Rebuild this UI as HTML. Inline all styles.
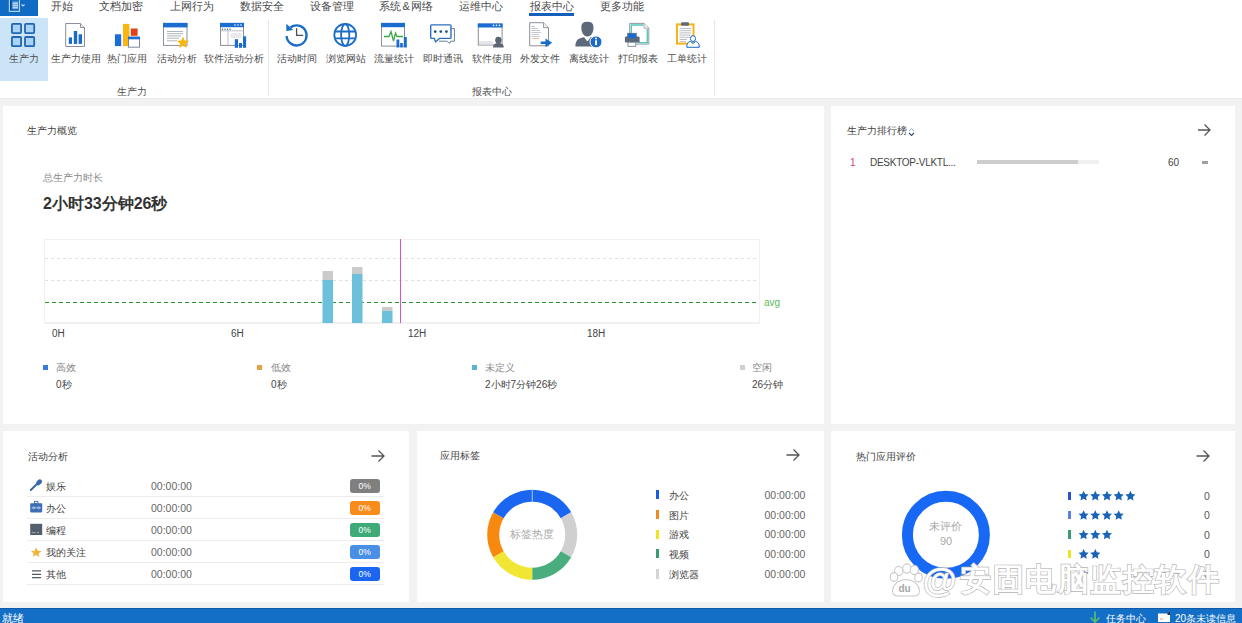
<!DOCTYPE html>
<html><head><meta charset="utf-8">
<style>
*{margin:0;padding:0;box-sizing:border-box}
html,body{width:1242px;height:623px;overflow:hidden;background:#f2f2f2;font-family:"Liberation Sans",sans-serif;color:#333;position:relative}
.a{position:absolute;white-space:nowrap}
.tab{position:absolute;top:0;font-size:11px;line-height:12px;color:#4a4a4a}
.lbl{position:absolute;top:53px;font-size:10px;line-height:11px;color:#4e4e4e;white-space:nowrap}
.ico{position:absolute;top:22px}
.panel{position:absolute;background:#fff}
.ttl{position:absolute;font-size:10px;line-height:11px;color:#444;white-space:nowrap}
</style></head><body>
<!-- top ribbon -->
<div class="a" style="left:0;top:0;width:1242px;height:98px;background:#fff"></div>
<div class="a" style="left:0;top:98px;width:1242px;height:1px;background:#ebebeb"></div>
<div class="a" style="left:0;top:0;width:38px;height:16px;background:#0f6bc3"></div>
<div class="tab" style="left:51px">开始</div>
<div class="tab" style="left:99px">文档加密</div>
<div class="tab" style="left:170px">上网行为</div>
<div class="tab" style="left:240px">数据安全</div>
<div class="tab" style="left:310px">设备管理</div>
<div class="tab" style="left:379px">系统<span style="padding:0 1px 0 1.5px">&amp;</span>网络</div>
<div class="tab" style="left:459px">运维中心</div>
<div class="tab" style="left:530px">报表中心</div>
<div class="tab" style="left:600px">更多功能</div>
<div class="a" style="left:529px;top:13px;width:45px;height:3px;background:#1560bd"></div>
<div class="a" style="left:0;top:18px;width:48px;height:63px;background:#cce4f7"></div>
<div class="lbl" style="left:9px">生产力</div>
<div class="lbl" style="left:51px">生产力使用</div>
<div class="lbl" style="left:107px">热门应用</div>
<div class="lbl" style="left:157px">活动分析</div>
<div class="lbl" style="left:204px">软件活动分析</div>
<div class="lbl" style="left:277px">活动时间</div>
<div class="lbl" style="left:326px">浏览网站</div>
<div class="lbl" style="left:374px">流量统计</div>
<div class="lbl" style="left:423px">即时通讯</div>
<div class="lbl" style="left:472px">软件使用</div>
<div class="lbl" style="left:520px">外发文件</div>
<div class="lbl" style="left:569px">离线统计</div>
<div class="lbl" style="left:618px">打印报表</div>
<div class="lbl" style="left:667px">工单统计</div>
<div class="a" style="left:268px;top:20px;width:1px;height:76px;background:#e6e6e6"></div>
<div class="a" style="left:714px;top:20px;width:1px;height:76px;background:#e6e6e6"></div>
<div class="lbl" style="left:117px;top:86px">生产力</div>
<div class="lbl" style="left:472px;top:86px">报表中心</div>


<!-- icon0 grid -->
<svg class="a" style="left:0;top:0" width="48" height="60" viewBox="0 0 48 60">
<g fill="#a9d2f5" stroke="#2166b0" stroke-width="1.8">
<rect x="11.9" y="23.9" width="9.2" height="9.2" rx="1"/><rect x="25" y="23.9" width="9.2" height="9.2" rx="1"/>
<rect x="11.9" y="37" width="9.2" height="9.2" rx="1"/><rect x="25" y="37" width="9.2" height="9.2" rx="1"/>
</g></svg>
<!-- icon1 doc bars -->
<svg class="a" style="left:60;top:20px;left:60px" width="30" height="30" viewBox="60 20 30 30">
<path d="M65.7 23.5 H80.5 L84.5 27.5 V46.5 H65.7 Z" fill="#fff" stroke="#8a8f99" stroke-width="1"/>
<path d="M80.5 23.5 V27.5 H84.5" fill="#eee" stroke="#8a8f99" stroke-width="1"/>
<rect x="68.8" y="37.4" width="3.2" height="6.5" fill="#1a6cc6"/>
<rect x="73.8" y="31" width="3.4" height="12.9" fill="#1a6cc6"/>
<rect x="78.6" y="34.3" width="3.4" height="9.6" fill="#1a6cc6"/>
</svg>
<!-- icon2 hot apps -->
<svg class="a" style="left:110px;top:20px" width="35" height="30" viewBox="110 20 35 30">
<rect x="114.9" y="34.3" width="6.3" height="11.8" fill="#1a6cd8"/>
<rect x="123" y="23.9" width="6.4" height="22.2" fill="#fbb512"/>
<rect x="130.8" y="28.5" width="6.8" height="7.3" fill="#e0401c"/>
<rect x="128.5" y="37.2" width="11" height="10" fill="#fff" stroke="#7d8a9e" stroke-width="1"/>
<rect x="128" y="36.7" width="12" height="2.6" fill="#1a6cd8"/>
</svg>
<!-- icon3 activity analysis -->
<svg class="a" style="left:160px;top:20px" width="32" height="30" viewBox="160 20 32 30">
<rect x="163.5" y="23.4" width="23.5" height="22" fill="#fff" stroke="#8a8f99" stroke-width="1"/>
<rect x="163" y="22.9" width="24.5" height="4.5" fill="#1a6cd0"/>
<g stroke="#a8adb5" stroke-width="0.9"><path d="M167 31.5H183M167 33.7H183M167 35.9H181M167 38.2H179M167 40.8H177"/></g>
<path d="M183.00 36.40 L184.70 40.45 L189.09 40.82 L185.76 43.70 L186.76 47.98 L183.00 45.70 L179.24 47.98 L180.24 43.70 L176.91 40.82 L181.30 40.45Z" fill="#f6b60d"/>
</svg>
<!-- icon4 software activity -->
<svg class="a" style="left:217px;top:20px" width="32" height="30" viewBox="217 20 32 30">
<rect x="220.5" y="23.4" width="23" height="22" fill="#fff" stroke="#8a8f99" stroke-width="1"/>
<rect x="220" y="22.9" width="24" height="4.3" fill="#1a6cd0"/>
<g fill="#fff"><circle cx="235" cy="25" r="0.8"/><circle cx="238" cy="25" r="0.8"/><circle cx="241" cy="25" r="0.8"/></g>
<g fill="#4a5a70"><circle cx="222.5" cy="29.3" r="0.7"/><circle cx="225" cy="29.3" r="0.7"/><circle cx="227.5" cy="29.3" r="0.7"/><circle cx="230" cy="29.3" r="0.7"/></g>
<path d="M220.5 30.8H243.5M228 30.8V45.4" stroke="#a8adb5" stroke-width="0.8"/>
<rect x="230.5" y="33" width="11" height="5" fill="#e8eaee"/>
<rect x="234.8" y="39.2" width="3.2" height="8.6" fill="#1a6cd0"/>
<rect x="239" y="43" width="3" height="4.8" fill="#1a6cd0"/>
<rect x="243" y="36.3" width="3.1" height="11.5" fill="#1a6cd0"/>
</svg>
<!-- icon5 clock -->
<svg class="a" style="left:282px;top:20px" width="30" height="30" viewBox="282 20 30 30">
<path d="M290.5 27.5 A10 10 0 1 1 286.6 36" fill="none" stroke="#1a6cc6" stroke-width="2.3"/>
<path d="M286.3 23.8 L286.3 31 L293.2 30 Z" fill="#1a6cc6"/>
<path d="M296.6 28.3 V35.4 H303.2" fill="none" stroke="#4a5060" stroke-width="1.3"/>
</svg>
<!-- icon6 globe -->
<svg class="a" style="left:330px;top:20px" width="30" height="30" viewBox="330 20 30 30">
<g fill="none" stroke="#1a6cc6" stroke-width="1.8">
<circle cx="345.2" cy="34.9" r="10.9"/>
<ellipse cx="345.2" cy="34.9" rx="4.1" ry="10.9"/>
<path d="M335 31.5H355.4M335 38.3H355.4"/>
</g></svg>
<!-- icon7 traffic -->
<svg class="a" style="left:378px;top:20px" width="32" height="30" viewBox="378 20 32 30">
<rect x="381.5" y="23.4" width="23" height="22.7" fill="#fff" stroke="#8a8f99" stroke-width="1"/>
<rect x="381" y="22.9" width="24" height="4.3" fill="#1a6cd0"/>
<path d="M384 36.5 H389 L391 31.5 L393.5 41 L395.5 33 L397 36.5 H403" fill="none" stroke="#3aa84a" stroke-width="1.3"/>
<rect x="396.5" y="39.5" width="2.8" height="8" fill="#1a6cd0"/>
<rect x="400.2" y="43" width="2.6" height="4.5" fill="#1a6cd0"/>
<rect x="403.8" y="37" width="3" height="10.5" fill="#1a6cd0"/>
</svg>
<!-- icon8 chat -->
<svg class="a" style="left:427px;top:20px" width="32" height="30" viewBox="427 20 32 30">
<path d="M451.5 28.6 H454.4 V41.2 H450.6 L449.8 43.4 L446.8 41.2 H439" fill="none" stroke="#6a7f9a" stroke-width="1"/>
<path d="M431.6 24.9 H450.1 Q451 24.9 451 25.8 V37.5 Q451 38.4 450.1 38.4 H439.5 L435.6 41.9 L434.3 38.4 H431.6 Q430.7 38.4 430.7 37.5 V25.8 Q430.7 24.9 431.6 24.9 Z" fill="#fff" stroke="#2a70c0" stroke-width="1.4"/>
<g fill="#1d4f8a"><circle cx="435.2" cy="31.6" r="1.35"/><circle cx="440.8" cy="31.6" r="1.35"/><circle cx="446.4" cy="31.6" r="1.35"/></g>
</svg>
<!-- icon9 software use -->
<svg class="a" style="left:475px;top:20px" width="32" height="30" viewBox="475 20 32 30">
<rect x="478.3" y="24" width="23.8" height="21" fill="#fff" stroke="#8a8f99" stroke-width="1"/>
<rect x="477.8" y="23.5" width="24.8" height="4" fill="#1a6cd0"/>
<g fill="#fff"><circle cx="493.5" cy="25.4" r="0.8"/><circle cx="496.5" cy="25.4" r="0.8"/><circle cx="499.5" cy="25.4" r="0.8"/></g>
<rect x="479" y="41" width="14" height="3.5" fill="#e3e6ea"/>
<path d="M498.4 36.7 a3 3.3 0 1 1 -0.01 0 Z" fill="#5a6675"/>
<ellipse cx="498.4" cy="40.2" rx="3" ry="3.4" fill="#5a6675"/>
<path d="M493 47.6 Q493 43 498.4 43 Q503.8 43 503.8 47.6 Z" fill="#5a6675"/>
</svg>
<!-- icon10 outgoing file -->
<svg class="a" style="left:526px;top:20px" width="30" height="30" viewBox="526 20 30 30">
<path d="M529.7 22.7 H543.5 L548.5 27.7 V45.8 H529.7 Z" fill="#fff" stroke="#8a8f99" stroke-width="1"/>
<path d="M543.5 22.7 V27.7 H548.5" fill="#f0f0f0" stroke="#8a8f99" stroke-width="0.9"/>
<g stroke="#c4c8ce" stroke-width="1"><path d="M531.5 26.5H535M531.5 28.5H538M531.5 30.5H540M531.5 32.5H541M531.5 34.5H539M531.5 36.5H540"/></g>
<path d="M532.5 38.5H539" stroke="#e8b890" stroke-width="1"/>
<path d="M540.7 42.8 H547" stroke="#1a6cc6" stroke-width="2.6"/>
<path d="M545.5 38.4 L552.2 42.8 L545.5 47.3 Z" fill="#1a6cc6"/>
</svg>
<!-- icon11 offline -->
<svg class="a" style="left:572px;top:20px" width="32" height="30" viewBox="572 20 32 30">
<path d="M581.3 27 Q581.3 21.8 587.4 21.8 Q593.5 21.8 593.5 27 Q593.5 33 590.5 35.5 Q587.4 37.5 584.3 35.5 Q581.3 33 581.3 27 Z" fill="#5d6978"/>
<path d="M575.4 46.5 Q575.4 40 579.5 38.5 L584.5 37 L587.4 41 L590.3 37 L595 38.5 Q598 40 598 46.5 Z" fill="#5d6978"/>
<path d="M584.5 37 L587.4 41 L590.3 37" fill="none" stroke="#fff" stroke-width="0.9"/>
<circle cx="596" cy="41.9" r="6" fill="#1a6cc6" stroke="#fff" stroke-width="1"/>
<rect x="595.1" y="40.3" width="1.9" height="4.8" fill="#fff"/><circle cx="596" cy="38.5" r="1.1" fill="#fff"/>
</svg>
<!-- icon12 print -->
<svg class="a" style="left:622px;top:20px" width="32" height="30" viewBox="622 20 32 30">
<path d="M629.7 23.4 H644 L648.8 28.2 V44.1 H629.7 Z" fill="#fff" stroke="#8f9aa5" stroke-width="1"/>
<path d="M644 23.4 V28.2 H648.8" fill="#f2f2f2" stroke="#8f9aa5" stroke-width="0.8"/>
<path d="M631.3 35 V25 H643.3 M647.3 29 V42.6 H638" fill="none" stroke="#50c8b8" stroke-width="1.3"/>
<rect x="624.9" y="36.5" width="14.7" height="6" rx="1.2" fill="#5d6978"/>
<rect x="627.6" y="33.2" width="8.7" height="5.2" fill="#1a6cd0" stroke="#5d6978" stroke-width="0.6"/>
<rect x="628" y="42.3" width="7.8" height="4" fill="#fff" stroke="#7d8995" stroke-width="0.9"/>
</svg>
<!-- icon13 clipboard -->
<svg class="a" style="left:672px;top:20px" width="30" height="30" viewBox="672 20 30 30">
<rect x="677" y="24.4" width="16.5" height="19.2" fill="#fff" stroke="#f6b512" stroke-width="2"/>
<rect x="681" y="22.2" width="8" height="3.6" rx="1.2" fill="#5d6978"/>
<g stroke="#a8adb5" stroke-width="0.8"><path d="M679.5 28.5H691M679.5 30.7H691M679.5 32.9H691M679.5 35.1H691M679.5 37.3H690M679.5 39.5H687M679.5 41.7H686"/></g>
<path d="M686.8 47.3 Q686.8 41.8 690.5 41.5 L693 43.5 L695.5 41.5 Q699.3 41.8 699.3 47.3 Z" fill="#fff" stroke="#1a6cc6" stroke-width="1"/>
<ellipse cx="693" cy="38.6" rx="2.6" ry="2.9" fill="#fff" stroke="#1a6cc6" stroke-width="1"/>
</svg>
<!-- file button icon -->
<svg class="a" style="left:0;top:0" width="38" height="16" viewBox="0 0 38 16">
<rect x="9.4" y="-1" width="10" height="12.4" fill="none" stroke="#b8dcff" stroke-width="1.1"/>
<path d="M10.6 0.5V10.4" stroke="#0a3a70" stroke-width="1"/>
<rect x="12.5" y="1.5" width="5.5" height="7.5" fill="#7fb0e0"/>
<path d="M12.5 3.5H18M12.5 5.5H18M12.5 7.5H18" stroke="#c8e4ff" stroke-width="0.7"/>
<path d="M21.5 4.5 L23 6 L24.5 4.5" fill="none" stroke="#b8dcff" stroke-width="1.2"/>
</svg>

<!-- panels -->
<div class="panel" style="left:3px;top:106px;width:821px;height:318px"></div>
<div class="panel" style="left:831px;top:106px;width:404px;height:318px"></div>
<div class="panel" style="left:3px;top:431px;width:406px;height:171px"></div>
<div class="panel" style="left:417px;top:431px;width:407px;height:171px"></div>
<div class="panel" style="left:831px;top:431px;width:404px;height:171px"></div>


<!-- panel1 content -->
<div class="ttl" style="left:27px;top:125px">生产力概览</div>
<div class="ttl" style="left:43px;top:172px;color:#888">总生产力时长</div>
<div class="a" style="left:43px;top:194px;font-size:16px;line-height:20px;font-weight:bold;color:#333">2小时33分钟26秒</div>
<svg class="a" style="left:0;top:230px" width="824" height="120" viewBox="0 230 824 120">
<rect x="44.5" y="239.5" width="715" height="83.5" fill="#fff" stroke="#f0f0f0" stroke-width="1"/>
<path d="M45 258.5H759M45 280.5H759" stroke="#e0e0e0" stroke-width="1" stroke-dasharray="3 3"/>
<path d="M45 302.5H759" stroke="#2f962f" stroke-width="1" stroke-dasharray="4 3"/>
<path d="M45 323H759" stroke="#e8e8e8" stroke-width="1"/>
<rect x="322.5" y="271" width="10.5" height="9" fill="#cbcbcb"/><rect x="322.5" y="280" width="10.5" height="43" fill="#6cc0dc"/>
<rect x="352" y="267" width="10.5" height="7" fill="#cbcbcb"/><rect x="352" y="274" width="10.5" height="49" fill="#6cc0dc"/>
<rect x="382" y="307" width="10.5" height="4" fill="#cbcbcb"/><rect x="382" y="311" width="10.5" height="12" fill="#6cc0dc"/>
<path d="M400.5 239V323" stroke="#d850d8" stroke-width="1"/>
</svg>
<div class="a" style="left:764px;top:297px;font-size:10px;line-height:12px;color:#5cb85c">avg</div>
<div class="a" style="left:52px;top:328px;font-size:10px;line-height:12px;color:#444">0H</div>
<div class="a" style="left:231px;top:328px;font-size:10px;line-height:12px;color:#444">6H</div>
<div class="a" style="left:408px;top:328px;font-size:10px;line-height:12px;color:#444">12H</div>
<div class="a" style="left:587px;top:328px;font-size:10px;line-height:12px;color:#444">18H</div>
<div class="a" style="left:43px;top:365px;width:5px;height:5px;background:#3a7bd5"></div>
<div class="a" style="left:257px;top:365px;width:5px;height:5px;background:#e8a040"></div>
<div class="a" style="left:472px;top:365px;width:5px;height:5px;background:#5ab4d4"></div>
<div class="a" style="left:740px;top:365px;width:5px;height:5px;background:#d0d0d0"></div>
<div class="ttl" style="left:56px;top:362px;color:#888">高效</div>
<div class="ttl" style="left:271px;top:362px;color:#888">低效</div>
<div class="ttl" style="left:485px;top:362px;color:#888">未定义</div>
<div class="ttl" style="left:752px;top:362px;color:#888">空闲</div>
<div class="ttl" style="left:56px;top:379px;color:#444">0秒</div>
<div class="ttl" style="left:271px;top:379px;color:#444">0秒</div>
<div class="ttl" style="left:485px;top:379px;color:#444">2小时7分钟26秒</div>
<div class="ttl" style="left:752px;top:379px;color:#444">26分钟</div>

<!-- panel2 content -->
<div class="ttl" style="left:847px;top:125px">生产力排行榜</div>
<svg class="a" style="left:907px;top:127px" width="9" height="10" viewBox="0 0 9 10"><path d="M2 4.2 L4.5 1.8 L7 4.2" fill="none" stroke="#8aa8d0" stroke-width="1"/><path d="M2 6 L4.5 8.5 L7 6" fill="none" stroke="#2a4a7a" stroke-width="1.1"/></svg>
<svg class="a" style="left:1196px;top:123px" width="16" height="14" viewBox="0 0 16 14"><path d="M2 7H14M8.5 1.5L14 7L8.5 12.5" fill="none" stroke="#555" stroke-width="1.3"/></svg>
<div class="a" style="left:850px;top:157px;font-size:10px;line-height:12px;color:#d04870">1</div>
<div class="a" style="left:870px;top:157px;font-size:10px;line-height:12px;letter-spacing:-0.27px;color:#444">DESKTOP-VLKTL...</div>
<div class="a" style="left:977px;top:160px;width:122px;height:4px;background:#f0f0f0"></div>
<div class="a" style="left:977px;top:160px;width:101px;height:4px;background:#cdcdcd"></div>
<div class="a" style="left:1168px;top:157px;font-size:10px;line-height:12px;color:#444">60</div>
<div class="a" style="left:1202px;top:161px;width:6px;height:3px;background:#a0a0a0"></div>

<!-- panel3 -->
<div class="ttl" style="left:28px;top:451px">活动分析</div>
<svg class="a" style="left:370px;top:449px" width="16" height="14" viewBox="0 0 16 14"><path d="M1.5 7H14M8.5 1.5L14 7L8.5 12.5" fill="none" stroke="#555" stroke-width="1.3"/></svg>
<div class="ttl" style="left:46px;top:481px;color:#444">娱乐</div>
<div class="a" style="left:151px;top:480px;font-size:10.5px;line-height:12px;color:#666">00:00:00</div>
<div class="a" style="left:350px;top:478.5px;width:29.5px;height:14px;border-radius:3px;background:#7f7f7f;color:#fff;font-size:8.5px;line-height:14px;text-align:center">0%</div>
<div class="a" style="left:27px;top:496px;width:357px;height:1px;background:#ececec"></div>
<div class="ttl" style="left:46px;top:503px;color:#444">办公</div>
<div class="a" style="left:151px;top:502px;font-size:10.5px;line-height:12px;color:#666">00:00:00</div>
<div class="a" style="left:350px;top:500.5px;width:29.5px;height:14px;border-radius:3px;background:#f98b1a;color:#fff;font-size:8.5px;line-height:14px;text-align:center">0%</div>
<div class="a" style="left:27px;top:518px;width:357px;height:1px;background:#ececec"></div>
<div class="ttl" style="left:46px;top:525px;color:#444">编程</div>
<div class="a" style="left:151px;top:524px;font-size:10.5px;line-height:12px;color:#666">00:00:00</div>
<div class="a" style="left:350px;top:522.5px;width:29.5px;height:14px;border-radius:3px;background:#3eaa78;color:#fff;font-size:8.5px;line-height:14px;text-align:center">0%</div>
<div class="a" style="left:27px;top:540px;width:357px;height:1px;background:#ececec"></div>
<div class="ttl" style="left:46px;top:547px;color:#444">我的关注</div>
<div class="a" style="left:151px;top:546px;font-size:10.5px;line-height:12px;color:#666">00:00:00</div>
<div class="a" style="left:350px;top:544.5px;width:29.5px;height:14px;border-radius:3px;background:#4a8fe6;color:#fff;font-size:8.5px;line-height:14px;text-align:center">0%</div>
<div class="a" style="left:27px;top:562px;width:357px;height:1px;background:#ececec"></div>
<div class="ttl" style="left:46px;top:569px;color:#444">其他</div>
<div class="a" style="left:151px;top:568px;font-size:10.5px;line-height:12px;color:#666">00:00:00</div>
<div class="a" style="left:350px;top:566.5px;width:29.5px;height:14px;border-radius:3px;background:#1a66f0;color:#fff;font-size:8.5px;line-height:14px;text-align:center">0%</div>
<div class="a" style="left:27px;top:584px;width:357px;height:1px;background:#ececec"></div>
<svg class="a" style="left:28px;top:478px" width="18" height="104" viewBox="28 478 18 104">
<path d="M30.8 490 L37.2 483.8" stroke="#3a6aa8" stroke-width="2" stroke-linecap="round"/>
<ellipse cx="39" cy="482.4" rx="2.3" ry="3.4" transform="rotate(45 39 482.4)" fill="#3a6aa8"/>
<rect x="30.2" y="503.3" width="12" height="9.1" rx="0.8" fill="#3d6eb5"/>
<rect x="34.5" y="501.4" width="3.5" height="2.2" fill="none" stroke="#3d6eb5" stroke-width="0.9"/>
<path d="M31.5 507.8H41" stroke="#c0d6f0" stroke-width="0.7"/>
<circle cx="33.8" cy="507.8" r="1.1" fill="none" stroke="#c0d6f0" stroke-width="0.7"/><circle cx="38.7" cy="507.8" r="1.1" fill="none" stroke="#c0d6f0" stroke-width="0.7"/>
<rect x="30.2" y="523.8" width="12" height="11.2" fill="#55606e"/>
<path d="M31.8 532.6H35.5M37 532.6H39" stroke="#aab2bc" stroke-width="0.9"/>
<path d="M36.2 547.3 L37.7 550.7 L41.5 551 L38.6 553.4 L39.5 557.1 L36.2 555.1 L32.9 557.1 L33.8 553.4 L30.9 551 L34.7 550.7 Z" fill="#f2b33a"/>
<path d="M32 570.9H41M32 574.3H41M32 577.7H41" stroke="#555a62" stroke-width="1.3"/>
</svg>
<!-- panel4 -->
<div class="ttl" style="left:440px;top:450px">应用标签</div>
<svg class="a" style="left:785px;top:448px" width="16" height="14" viewBox="0 0 16 14"><path d="M1.5 7H14M8.5 1.5L14 7L8.5 12.5" fill="none" stroke="#555" stroke-width="1.3"/></svg>
<svg class="a" style="left:417px;top:431px" width="407" height="170" viewBox="417 431 407 170"><path d="M532.20 495.70A39 39 0 0 1 565.97 515.20" fill="none" stroke="#1a66f0" stroke-width="12"/><path d="M565.97 515.20A39 39 0 0 1 565.97 554.20" fill="none" stroke="#d0d0d0" stroke-width="12"/><path d="M565.97 554.20A39 39 0 0 1 532.20 573.70" fill="none" stroke="#4aad7e" stroke-width="12"/><path d="M532.20 573.70A39 39 0 0 1 498.43 554.20" fill="none" stroke="#f2e635" stroke-width="12"/><path d="M498.43 554.20A39 39 0 0 1 498.43 515.20" fill="none" stroke="#f7890f" stroke-width="12"/><path d="M498.43 515.20A39 39 0 0 1 532.20 495.70" fill="none" stroke="#1a66f0" stroke-width="12"/><path d="M532.2 489.7V502" stroke="#fff" stroke-width="0.8" opacity="0.7"/></svg>
<div class="a" style="left:510px;top:528px;font-size:11px;line-height:13px;color:#aaa">标签热度</div>
<div class="a" style="left:655.5px;top:490.4px;width:3px;height:9px;background:#1a5ce0"></div>
<div class="ttl" style="left:669px;top:489.9px;color:#444">办公</div>
<div class="a" style="left:764.5px;top:488.9px;font-size:10.5px;line-height:12px;color:#666">00:00:00</div>
<div class="a" style="left:655.5px;top:510.3px;width:3px;height:9px;background:#f08a20"></div>
<div class="ttl" style="left:669px;top:509.8px;color:#444">图片</div>
<div class="a" style="left:764.5px;top:508.8px;font-size:10.5px;line-height:12px;color:#666">00:00:00</div>
<div class="a" style="left:655.5px;top:529.7px;width:3px;height:9px;background:#f0e420"></div>
<div class="ttl" style="left:669px;top:529.2px;color:#444">游戏</div>
<div class="a" style="left:764.5px;top:528.2px;font-size:10.5px;line-height:12px;color:#666">00:00:00</div>
<div class="a" style="left:655.5px;top:549px;width:3px;height:9px;background:#3a9a70"></div>
<div class="ttl" style="left:669px;top:548.5px;color:#444">视频</div>
<div class="a" style="left:764.5px;top:547.5px;font-size:10.5px;line-height:12px;color:#666">00:00:00</div>
<div class="a" style="left:655.5px;top:569.3px;width:3px;height:9.5px;background:#d4d4d4"></div>
<div class="ttl" style="left:669px;top:568.8px;color:#444">浏览器</div>
<div class="a" style="left:764.5px;top:567.8px;font-size:10.5px;line-height:12px;color:#666">00:00:00</div>
<!-- panel5 -->
<div class="ttl" style="left:856px;top:451px">热门应用评价</div>
<svg class="a" style="left:1195px;top:449px" width="16" height="14" viewBox="0 0 16 14"><path d="M1.5 7H14M8.5 1.5L14 7L8.5 12.5" fill="none" stroke="#555" stroke-width="1.3"/></svg>
<svg class="a" style="left:831px;top:431px" width="404" height="170" viewBox="831 431 404 170"><circle cx="945.9" cy="534.8" r="38.5" fill="none" stroke="#1668f5" stroke-width="11"/><path d="M1083.60,490.80 L1085.13,494.00 L1088.64,494.46 L1086.07,496.90 L1086.72,500.39 L1083.60,498.70 L1080.48,500.39 L1081.13,496.90 L1078.56,494.46 L1082.07,494.00Z" fill="#1a64b8"/><path d="M1095.30,490.80 L1096.83,494.00 L1100.34,494.46 L1097.77,496.90 L1098.42,500.39 L1095.30,498.70 L1092.18,500.39 L1092.83,496.90 L1090.26,494.46 L1093.77,494.00Z" fill="#1a64b8"/><path d="M1107.00,490.80 L1108.53,494.00 L1112.04,494.46 L1109.47,496.90 L1110.12,500.39 L1107.00,498.70 L1103.88,500.39 L1104.53,496.90 L1101.96,494.46 L1105.47,494.00Z" fill="#1a64b8"/><path d="M1118.70,490.80 L1120.23,494.00 L1123.74,494.46 L1121.17,496.90 L1121.82,500.39 L1118.70,498.70 L1115.58,500.39 L1116.23,496.90 L1113.66,494.46 L1117.17,494.00Z" fill="#1a64b8"/><path d="M1130.40,490.80 L1131.93,494.00 L1135.44,494.46 L1132.87,496.90 L1133.52,500.39 L1130.40,498.70 L1127.28,500.39 L1127.93,496.90 L1125.36,494.46 L1128.87,494.00Z" fill="#1a64b8"/><path d="M1083.60,510.20 L1085.13,513.40 L1088.64,513.86 L1086.07,516.30 L1086.72,519.79 L1083.60,518.10 L1080.48,519.79 L1081.13,516.30 L1078.56,513.86 L1082.07,513.40Z" fill="#1a64b8"/><path d="M1095.30,510.20 L1096.83,513.40 L1100.34,513.86 L1097.77,516.30 L1098.42,519.79 L1095.30,518.10 L1092.18,519.79 L1092.83,516.30 L1090.26,513.86 L1093.77,513.40Z" fill="#1a64b8"/><path d="M1107.00,510.20 L1108.53,513.40 L1112.04,513.86 L1109.47,516.30 L1110.12,519.79 L1107.00,518.10 L1103.88,519.79 L1104.53,516.30 L1101.96,513.86 L1105.47,513.40Z" fill="#1a64b8"/><path d="M1118.70,510.20 L1120.23,513.40 L1123.74,513.86 L1121.17,516.30 L1121.82,519.79 L1118.70,518.10 L1115.58,519.79 L1116.23,516.30 L1113.66,513.86 L1117.17,513.40Z" fill="#1a64b8"/><path d="M1083.60,529.70 L1085.13,532.90 L1088.64,533.36 L1086.07,535.80 L1086.72,539.29 L1083.60,537.60 L1080.48,539.29 L1081.13,535.80 L1078.56,533.36 L1082.07,532.90Z" fill="#1a64b8"/><path d="M1095.30,529.70 L1096.83,532.90 L1100.34,533.36 L1097.77,535.80 L1098.42,539.29 L1095.30,537.60 L1092.18,539.29 L1092.83,535.80 L1090.26,533.36 L1093.77,532.90Z" fill="#1a64b8"/><path d="M1107.00,529.70 L1108.53,532.90 L1112.04,533.36 L1109.47,535.80 L1110.12,539.29 L1107.00,537.60 L1103.88,539.29 L1104.53,535.80 L1101.96,533.36 L1105.47,532.90Z" fill="#1a64b8"/><path d="M1083.60,549.10 L1085.13,552.30 L1088.64,552.76 L1086.07,555.20 L1086.72,558.69 L1083.60,557.00 L1080.48,558.69 L1081.13,555.20 L1078.56,552.76 L1082.07,552.30Z" fill="#1a64b8"/><path d="M1095.30,549.10 L1096.83,552.30 L1100.34,552.76 L1097.77,555.20 L1098.42,558.69 L1095.30,557.00 L1092.18,558.69 L1092.83,555.20 L1090.26,552.76 L1093.77,552.30Z" fill="#1a64b8"/><path d="M1083.60,568.80 L1085.13,572.00 L1088.64,572.46 L1086.07,574.90 L1086.72,578.39 L1083.60,576.70 L1080.48,578.39 L1081.13,574.90 L1078.56,572.46 L1082.07,572.00Z" fill="#1a64b8"/></svg>
<div class="a" style="left:929px;top:520px;font-size:11px;line-height:13px;color:#aaa">未评价</div>
<div class="a" style="left:940px;top:535px;font-size:11px;line-height:13px;color:#aaa">90</div>
<div class="a" style="left:1068px;top:491.5px;width:3px;height:8.5px;background:#2a52c8"></div>
<div class="a" style="left:1204px;top:490.0px;font-size:10.5px;line-height:12px;color:#555">0</div>
<div class="a" style="left:1068px;top:510.8px;width:3px;height:8.5px;background:#5a80e0"></div>
<div class="a" style="left:1204px;top:509.3px;font-size:10.5px;line-height:12px;color:#555">0</div>
<div class="a" style="left:1068px;top:530.2px;width:3px;height:8.5px;background:#3a9a70"></div>
<div class="a" style="left:1204px;top:528.7px;font-size:10.5px;line-height:12px;color:#555">0</div>
<div class="a" style="left:1068px;top:549.6px;width:3px;height:8.5px;background:#f0e420"></div>
<div class="a" style="left:1204px;top:548.1px;font-size:10.5px;line-height:12px;color:#555">0</div>
<div class="a" style="left:1068px;top:569.3px;width:3px;height:8.5px;background:#f08a20"></div>
<div class="a" style="left:1204px;top:567.8px;font-size:10.5px;line-height:12px;color:#555">0</div>

<!-- status bar -->
<div class="a" style="left:0;top:608px;width:1242px;height:15px;background:#136fc6"></div>
<div class="a" style="left:0;top:608px;width:1242px;height:1px;background:#0f5aa8"></div>
<div class="a" style="left:2px;top:612px;font-size:10.5px;line-height:13px;color:#fff">就绪</div>
<svg class="a" style="left:1088px;top:610px" width="14" height="13" viewBox="0 0 14 13"><path d="M7 1.5V12M2.5 7.5L7 12L11.5 7.5" fill="none" stroke="#5cc070" stroke-width="1.6"/></svg>
<div class="a" style="left:1106px;top:612px;font-size:10px;line-height:13px;color:#fff">任务中心</div>
<svg class="a" style="left:1157px;top:612px" width="14" height="11" viewBox="0 0 14 11"><rect x="1" y="1.5" width="12" height="8.5" fill="#fff"/><path d="M3 7H6" stroke="#d0a080" stroke-width="1"/><rect x="10.5" y="0.5" width="2.5" height="2.5" fill="#333"/></svg>
<div class="a" style="left:1175px;top:612px;font-size:10px;line-height:13px;color:#fff">20条未读信息</div>
<!-- watermark -->
<svg class="a" style="left:880px;top:555px" width="362" height="50" viewBox="880 555 362 50">
<g fill="#fff" stroke="#c8c8c8" stroke-width="1.1">
<ellipse cx="898.7" cy="571" rx="4.2" ry="4.6"/><ellipse cx="906.9" cy="568.5" rx="4.2" ry="4.6"/><ellipse cx="914.4" cy="570" rx="4.2" ry="4.6"/><ellipse cx="918.5" cy="577.5" rx="3.8" ry="4.4"/><ellipse cx="894" cy="577" rx="3.8" ry="4.4"/>
<path d="M898 596 Q891 596 893 588 Q896 580 906 579.5 Q916 580 919 588 Q921 596 914 596 Z"/>
</g>
<text x="898.5" y="592" font-size="10" fill="#a8a8a8" font-family="Liberation Sans" font-weight="bold">du</text>
<text x="922.5" y="592" font-size="35" fill="#fff" stroke="#b4b4b4" stroke-width="1.3" paint-order="stroke fill" font-weight="bold" font-family="Liberation Sans">@</text><text x="960" y="590" font-size="31" letter-spacing="1.5" fill="#fff" stroke="#b4b4b4" stroke-width="1.3" paint-order="stroke fill" font-weight="bold" font-family="Liberation Sans">安固电脑监控软件</text>
</svg>
</body></html>
